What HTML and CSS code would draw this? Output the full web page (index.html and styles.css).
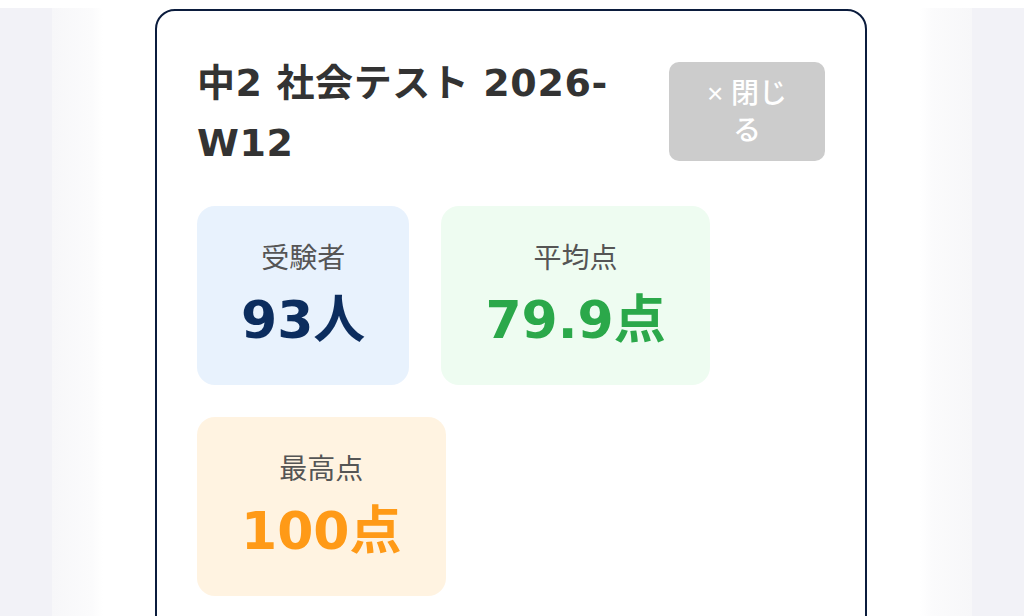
FILE: index.html
```html
<!DOCTYPE html>
<html lang="ja">
<head>
<meta charset="utf-8">
<title>中2 社会テスト 2026-W12</title>
<link rel="stylesheet" href="styles.css">
</head>
<body>
<div class="page">
  <div class="panel">
    <div class="card">
      <div class="card-header">
        <h1 class="title">中2 社会テスト 2026-W12</h1>
        <button class="close-btn" type="button">× 閉じる</button>
      </div>
      <div class="stats">
        <div class="stat stat-blue">
          <div class="stat-label">受験者</div>
          <div class="stat-value">93人</div>
        </div>
        <div class="stat stat-green">
          <div class="stat-label">平均点</div>
          <div class="stat-value">79.9点</div>
        </div>
        <div class="stat stat-orange">
          <div class="stat-label">最高点</div>
          <div class="stat-value">100点</div>
        </div>
      </div>
    </div>
  </div>
</div>
</body>
</html>
```
FILE: styles.css
```css
html, body {
  margin: 0;
  padding: 0;
  background: #ffffff;
  overflow: hidden;
  height: 616px;
}

.page {
  margin-top: 8px;
  height: 608px;
  background: #f2f2f7;
  display: flex;
}

.panel {
  flex: 1;
  margin: 0 52px;
  padding: 1px 51px 0 49px;
  background: linear-gradient(to right, #f7f7f9 0, #fbfbfc 40px, #ffffff 51px, #ffffff calc(100% - 52px), #fbfbfc calc(100% - 40px), #f7f7f9 100%);
  display: flex;
  justify-content: center;
}

.card {
  width: 712px;
  box-sizing: border-box;
  min-height: 800px;
  background: #ffffff;
  border: 2px solid #0b1c3d;
  border-radius: 20px;
  padding: 42px 40px 51px;
  font-family: "DejaVu Sans", "Noto Sans CJK JP", sans-serif;
}

.card-header {
  display: flex;
  align-items: flex-start;
  gap: 24px;
}

.title {
  flex: 1;
  margin: 0;
  font-size: 38px;
  line-height: 60px;
  font-weight: 700;
  letter-spacing: 0.6px;
  color: #333333;
}

.close-btn {
  flex-shrink: 0;
  margin-top: 9px;
  width: 156px;
  box-sizing: border-box;
  padding: 12.5px 28px;
  border: none;
  border-radius: 10px;
  background: #cccccc;
  color: #ffffff;
  font-family: "Liberation Sans", "Noto Sans CJK JP", sans-serif;
  font-size: 28px;
  line-height: 37px;
  font-weight: 500;
  text-align: center;
}

.stats {
  margin-top: 33px;
  display: flex;
  flex-wrap: wrap;
  gap: 32px;
}

.stat {
  padding: 29px 44px 34px;
  border-radius: 18px;
  text-align: center;
}

.stat-label {
  font-family: "Noto Sans CJK JP", sans-serif;
  font-size: 28px;
  line-height: 42px;
  color: #555555;
}

.stat-value {
  margin-top: 12px;
  font-size: 52px;
  line-height: 62px;
  font-weight: 700;
}

.stat-blue { background: #e8f2fd; }
.stat-blue .stat-value { color: #0c2d5e; }

.stat-green { background: #eefcf1; }
.stat-green .stat-value { color: #2ba84a; }

.stat-orange { background: #fff3e1; }
.stat-orange .stat-value { color: #ff9a17; }
```
